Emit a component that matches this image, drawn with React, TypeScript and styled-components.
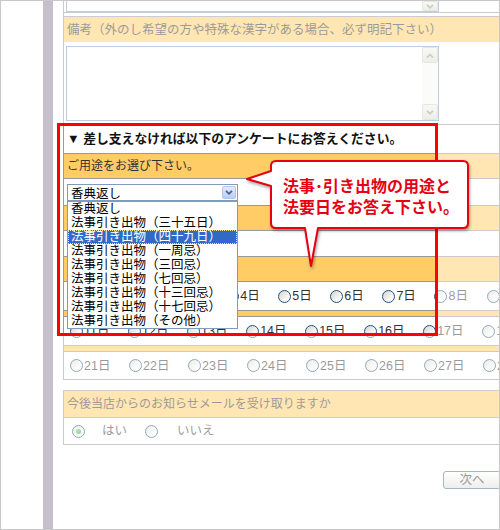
import React from "react";
import styled, { createGlobalStyle } from "styled-components";

const ORANGE = "#ffcc66";
const LINE = "#999999";
const FIELD = "#7f9db9";
const INK = "#333333";

const GlobalStyle = createGlobalStyle`
  html, body { margin: 0; padding: 0; background: #fff; }
  body { font-family: "Liberation Sans", "Noto Sans CJK JP", sans-serif; }
  * { box-sizing: border-box; }
`;

const Frame = styled.div`
  position: relative;
  width: 500px;
  height: 530px;
  border: 1px solid #c8c8c8;
  overflow: hidden;
  display: flex;
  background: #fff;
`;

const Margin = styled.div`
  flex: none;
  width: 42px;
`;

const SideBar = styled.div`
  flex: none;
  width: 10px;
  background: #897f97;
`;

const Gutter = styled.div`
  flex: none;
  width: 10px;
`;

const Main = styled.div`
  flex: none;
  width: 480px;
  display: flex;
  flex-direction: column;
`;

const Block = styled.div`
  display: flex;
  flex-direction: column;
  border-left: 1px solid ${LINE};
`;

const Row = styled.div<{ $h: number; $bg?: string; $bt?: boolean; $bb?: boolean; $top?: boolean }>`
  flex: none;
  height: ${(p) => p.$h}px;
  background: ${(p) => p.$bg || "#fff"};
  border-top: ${(p) => (p.$bt ? `1px solid ${LINE}` : "none")};
  border-bottom: ${(p) => (p.$bb ? `1px solid ${LINE}` : "none")};
  display: flex;
  align-items: ${(p) => (p.$top ? "flex-start" : "center")};
  white-space: nowrap;
  overflow: visible;
`;

const HeaderText = styled.span<{ $size?: number }>`
  padding-left: 3px;
  font-size: ${(p) => p.$size ?? 12}px;
  color: ${INK};
  line-height: 16px;
`;

const TitleText = styled.span`
  padding-left: 3px;
  font-size: 12.8px;
  font-weight: bold;
  color: #111;
  line-height: 16px;
`;

const TailBox = styled.div`
  align-self: flex-start;
  margin-left: 2px;
  width: 373px;
  height: 11px;
  border: 1px solid ${FIELD};
  border-top: none;
  display: flex;
  justify-content: flex-end;
`;

const TextArea = styled.div`
  margin: 4px 0 0 2px;
  width: 373px;
  height: 75px;
  border: 1px solid ${FIELD};
  background: #fff;
  display: flex;
  justify-content: flex-end;
`;

const ScrollTrack = styled.div`
  width: 16px;
  height: 100%;
  background: #f7f7f3;
  display: flex;
  flex-direction: column;
  justify-content: space-between;
`;

const ScrollBtn = styled.div<{ $h?: number }>`
  width: 16px;
  height: ${(p) => p.$h ?? 16}px;
  border: 1px solid #cfcfc4;
  border-radius: 2px;
  background: linear-gradient(#f0f0ea, #dcdcd2);
  display: flex;
  align-items: center;
  justify-content: center;
`;

const Chevron = ({ up, color, w = 8 }: { up?: boolean; color: string; w?: number }) => (
  <svg width={w} height={5} viewBox="0 0 8 5">
    <polyline
      points={up ? "1,4.5 4,1.5 7,4.5" : "1,0.8 4,3.8 7,0.8"}
      fill="none"
      stroke={color}
      strokeWidth={1.7}
    />
  </svg>
);

const SelectWrap = styled.div<{ $w: number; $mt: number }>`
  position: relative;
  align-self: flex-start;
  margin: ${(p) => p.$mt}px 0 0 3px;
  width: ${(p) => p.$w}px;
  height: 17px;
`;

const SelectBox = styled.div`
  width: 100%;
  height: 100%;
  border: 1px solid ${FIELD};
  background: #fff;
  display: flex;
  align-items: center;
  justify-content: space-between;
  padding: 0 1px 0 3px;
  font-size: 12.5px;
  color: #000;
`;

const SelectButton = styled.span`
  width: 14px;
  height: 13px;
  border: 1px solid #b3c5ef;
  border-radius: 2px;
  background: linear-gradient(#e3ebfe, #b9cdf7);
  display: flex;
  align-items: center;
  justify-content: center;
`;

const ListBox = styled.ul`
  position: absolute;
  top: 100%;
  left: 0;
  z-index: 3;
  width: 100%;
  margin: 0;
  padding: 0;
  list-style: none;
  border: 1px solid ${FIELD};
  background: #fff;
`;

const ListItem = styled.li<{ $active?: boolean }>`
  height: 14px;
  line-height: 14px;
  padding-left: 3px;
  font-size: 12.5px;
  color: ${(p) => (p.$active ? "#fff" : "#000")};
  background: ${(p) => (p.$active ? "#316ac5" : "transparent")};
  outline: ${(p) => (p.$active ? "1px dotted #f2e6a0" : "none")};
  outline-offset: -1px;
`;

const DateRow = styled.div`
  display: flex;
  align-items: center;
  gap: 18.6px;
  padding-left: 6px;
`;

const DateItem = styled.label`
  display: inline-flex;
  align-items: center;
  font-size: 12.5px;
  color: ${INK};
  line-height: 14px;
`;

const Radio = styled.span<{ $checked?: boolean; $gap?: number }>`
  flex: none;
  width: 13px;
  height: 13px;
  margin-right: ${(p) => p.$gap ?? 1}px;
  border-radius: 50%;
  border: 1px solid #1c5180;
  background: linear-gradient(135deg, #d4d4ce 0%, #f4f4f2 60%, #fff 100%);
  display: inline-flex;
  align-items: center;
  justify-content: center;
  &::after {
    content: "";
    display: ${(p) => (p.$checked ? "block" : "none")};
    width: 5px;
    height: 5px;
    border-radius: 50%;
    background: radial-gradient(circle at 40% 40%, #5fd35f, #219a21);
  }
`;

const Section = styled.div`
  margin-top: 10px;
  border: 1px solid ${LINE};
  border-right: none;
  display: flex;
  flex-direction: column;
`;

const OptionRow = styled.div`
  display: flex;
  align-items: center;
  gap: 18px;
  padding-left: 8px;
`;

const ButtonRow = styled.div`
  margin-top: 26px;
  padding-left: 380px;
  display: flex;
`;

const NextButton = styled.button`
  width: 58px;
  height: 18px;
  padding: 0;
  border: 1px solid #4a6a96;
  border-radius: 3px;
  background: linear-gradient(#ffffff, #dcdcd4);
  font-family: "Liberation Sans", "Noto Sans CJK JP", sans-serif;
  font-size: 12.5px;
  color: ${INK};
  line-height: 16px;
`;

const Highlight = styled.div`
  position: absolute;
  left: 56px;
  top: 122px;
  width: 381px;
  height: 213px;
  border: 3px solid #ff0000;
  box-shadow: 0 0 0 1200px rgba(255, 255, 255, 0.5);
  z-index: 5;
  pointer-events: none;
`;

const Callout = styled.div`
  position: absolute;
  left: 239px;
  top: 154px;
  width: 240px;
  height: 120px;
  z-index: 10;
`;

const CalloutShape = styled.svg`
  position: absolute;
  left: 0;
  top: 0;
  overflow: visible;
  filter: drop-shadow(1.5px 2px 1.5px rgba(0, 0, 0, 0.35));
`;

const CalloutText = styled.p`
  position: absolute;
  left: 43px;
  top: 20px;
  margin: 0;
  font-family: "Noto Sans CJK JP", sans-serif;
  font-size: 16px;
  font-weight: bold;
  line-height: 21px;
  color: #e60012;
  white-space: nowrap;
`;

const USES = [
  "香典返し",
  "法事引き出物（三十五日）",
  "法事引き出物（四十九日）",
  "法事引き出物（一周忌）",
  "法事引き出物（三回忌）",
  "法事引き出物（七回忌）",
  "法事引き出物（十三回忌）",
  "法事引き出物（十七回忌）",
  "法事引き出物（その他）",
];

const range = (a: number, b: number) => Array.from({ length: b - a + 1 }, (_, i) => a + i);

const Dates = ({ from, to }: { from: number; to: number }) => (
  <DateRow>
    {range(from, to).map((d) => (
      <DateItem key={d}>
        <Radio />
        {d}日
      </DateItem>
    ))}
  </DateRow>
);

export default function App() {
  return (
    <>
      <GlobalStyle />
      <Frame>
        <Margin />
        <SideBar />
        <Gutter />
        <Main>
          <Block>
            <Row $h={12} $bb>
              <TailBox>
                <ScrollBtn $h={10}>
                  <Chevron color="#9a9a8c" />
                </ScrollBtn>
              </TailBox>
            </Row>
            <Row $h={3} />
            <Row $h={26} $bg={ORANGE} $bt>
              <HeaderText $size={12.5}>備考（外のし希望の方や特殊な漢字がある場合、必ず明記下さい）</HeaderText>
            </Row>
            <Row $h={83} $bb $top>
              <TextArea>
                <ScrollTrack>
                  <ScrollBtn>
                    <Chevron up color="#9a9a8c" />
                  </ScrollBtn>
                  <ScrollBtn>
                    <Chevron color="#9a9a8c" />
                  </ScrollBtn>
                </ScrollTrack>
              </TextArea>
            </Row>
            <Row $h={29} $bb>
              <TitleText>▼ 差し支えなければ以下のアンケートにお答えください。</TitleText>
            </Row>
            <Row $h={25} $bg={ORANGE} $bb>
              <HeaderText>ご用途をお選び下さい。</HeaderText>
            </Row>
            <Row $h={27} $bb $top>
              <SelectWrap $w={171} $mt={5}>
                <SelectBox>
                  香典返し
                  <SelectButton>
                    <Chevron color="#4d6185" />
                  </SelectButton>
                </SelectBox>
                <ListBox>
                  {USES.map((u, i) => (
                    <ListItem key={u} $active={i === 2}>
                      {u}
                    </ListItem>
                  ))}
                </ListBox>
              </SelectWrap>
            </Row>
            <Row $h={25} $bg={ORANGE} $bb>
              <HeaderText>法要日</HeaderText>
            </Row>
            <Row $h={26} $bb $top>
              <SelectWrap $w={90} $mt={4}>
                <SelectBox>
                  1月
                  <SelectButton>
                    <Chevron color="#4d6185" />
                  </SelectButton>
                </SelectBox>
              </SelectWrap>
            </Row>
            <Row $h={25} $bg={ORANGE} $bb>
              <HeaderText>日</HeaderText>
            </Row>
            <Row $h={29} $bb>
              <Dates from={1} to={10} />
            </Row>
            <Row $h={6} $bg={ORANGE} $bb />
            <Row $h={29} $bb>
              <Dates from={11} to={20} />
            </Row>
            <Row $h={6} $bg={ORANGE} $bb />
            <Row $h={28} $bb>
              <Dates from={21} to={31} />
            </Row>
          </Block>
          <Section>
            <Row $h={27} $bg={ORANGE} $bb>
              <HeaderText>今後当店からのお知らせメールを受け取りますか</HeaderText>
            </Row>
            <Row $h={26}>
              <OptionRow>
                <DateItem>
                  <Radio $checked $gap={17} />
                  はい
                </DateItem>
                <DateItem>
                  <Radio $gap={19} />
                  いいえ
                </DateItem>
              </OptionRow>
            </Row>
          </Section>
          <ButtonRow>
            <NextButton type="button">次へ</NextButton>
          </ButtonRow>
        </Main>
        <Highlight />
        <Callout>
          <CalloutShape width={240} height={120} viewBox="0 0 240 120">
            <path
              d="M36 6 H223 Q228 6 228 11 V68 Q228 73 223 73 H78 L71 111 L65 73 H36 Q31 73 31 68 V31 L7 24 L31 16 V11 Q31 6 36 6 Z"
              fill="#fff"
              stroke="#e60012"
              strokeWidth={2}
              strokeLinejoin="round"
            />
          </CalloutShape>
          <CalloutText>
            法事･引き出物の用途と
            <br />
            法要日をお答え下さい。
          </CalloutText>
        </Callout>
      </Frame>
    </>
  );
}
